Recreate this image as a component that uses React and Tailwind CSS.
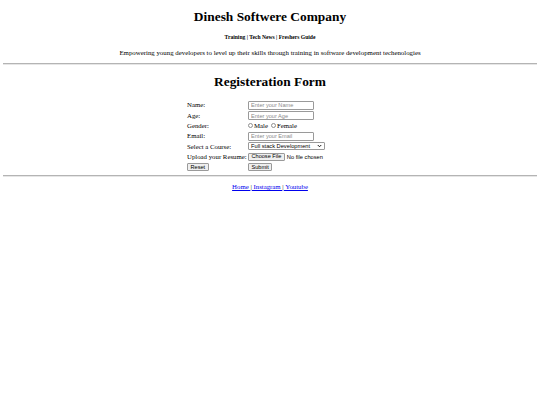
import React from "react";

const sans = { fontFamily: '"Liberation Sans", Arial, sans-serif' };

function TextInput({ placeholder }) {
  return (
    <input
      type="text"
      placeholder={placeholder}
      className="w-[66px] h-[9px] border border-[#9a9a9a] rounded-[1px] bg-white px-[2px] text-[5.6px] leading-none placeholder:text-[#8a8a8a] outline-none"
      style={sans}
    />
  );
}

function Radio({ label }) {
  return (
    <span className="flex items-center gap-[1px]">
      <span className="w-[5px] h-[5px] rounded-full border border-[#8f8f8f] bg-white"></span>
      <span>{label}</span>
    </span>
  );
}

function Btn({ children }) {
  return (
    <span
      className="inline-flex items-center justify-center h-[8px] px-[2.5px] border border-[#9a9a9a] rounded-[1px] bg-[#efefef] text-[5.6px] leading-none text-black"
      style={sans}
    >
      {children}
    </span>
  );
}

function Rule({ className }) {
  return <div className={"h-[2px] border-t border-[#b4b4b4] border-b border-b-[#e6e6e6] " + className}></div>;
}

export default function App() {
  const serif = { fontFamily: '"Liberation Serif", "Times New Roman", serif' };
  return (
    <div className="w-[540px] h-[405px] bg-white text-black px-[3.4px] text-[6.8px] leading-[1.15]" style={serif}>
      <h1 className="text-center font-bold text-[13.4px] leading-[15px] pt-[9px]">Dinesh Softwere Company</h1>
      <div className="text-center font-bold text-[5.6px] leading-[5.3px] mt-[11px]">Training | Tech News | Freshers Guide</div>
      <p className="text-center text-[6.85px] mt-[9px]">Empowering young developers to level up their skills through training in software development techenologies</p>
      <Rule className="mt-[6px]" />
      <h2 className="text-center font-bold text-[13.4px] leading-[15px] mt-[9px]">Registeration Form</h2>
      <div className="flex justify-center mt-[11px]">
        <div className="grid grid-cols-[61px_105px] auto-rows-[10.3px] items-center">
          <div>Name:</div>
          <div><TextInput placeholder="Enter your Name" /></div>
          <div>Age:</div>
          <div><TextInput placeholder="Enter your Age" /></div>
          <div>Gender:</div>
          <div className="flex items-center gap-[3px]">
            <Radio label="Male" />
            <Radio label="Female" />
          </div>
          <div>Email:</div>
          <div><TextInput placeholder="Enter your Email" /></div>
          <div>Select a Course:</div>
          <div>
            <div className="w-[77px] h-[8px] border border-[#9a9a9a] rounded-[1px] bg-white flex items-center justify-between px-[2px] text-[5.7px] leading-none" style={sans}>
              <span>Full stack Development</span>
              <svg width="5" height="4" viewBox="0 0 10 8"><path d="M1.5 2 L5 5.5 L8.5 2" stroke="#000" strokeWidth="1.8" fill="none" /></svg>
            </div>
          </div>
          <div>Upload your Resume:</div>
          <div className="flex items-center gap-[2px] text-[5.7px]" style={sans}>
            <Btn>Choose File</Btn>
            <span>No file chosen</span>
          </div>
          <div><Btn>Reset</Btn></div>
          <div><Btn>Submit</Btn></div>
        </div>
      </div>
      <Rule className="mt-[3px]" />
      <div className="text-center mt-[6px]">
        <a href="#" className="text-[#0000ee] underline">Home </a>|
        <a href="#" className="text-[#0000ee] underline"> Instagram </a>|
        <a href="#" className="text-[#0000ee] underline"> Youtube</a>
      </div>
    </div>
  );
}
